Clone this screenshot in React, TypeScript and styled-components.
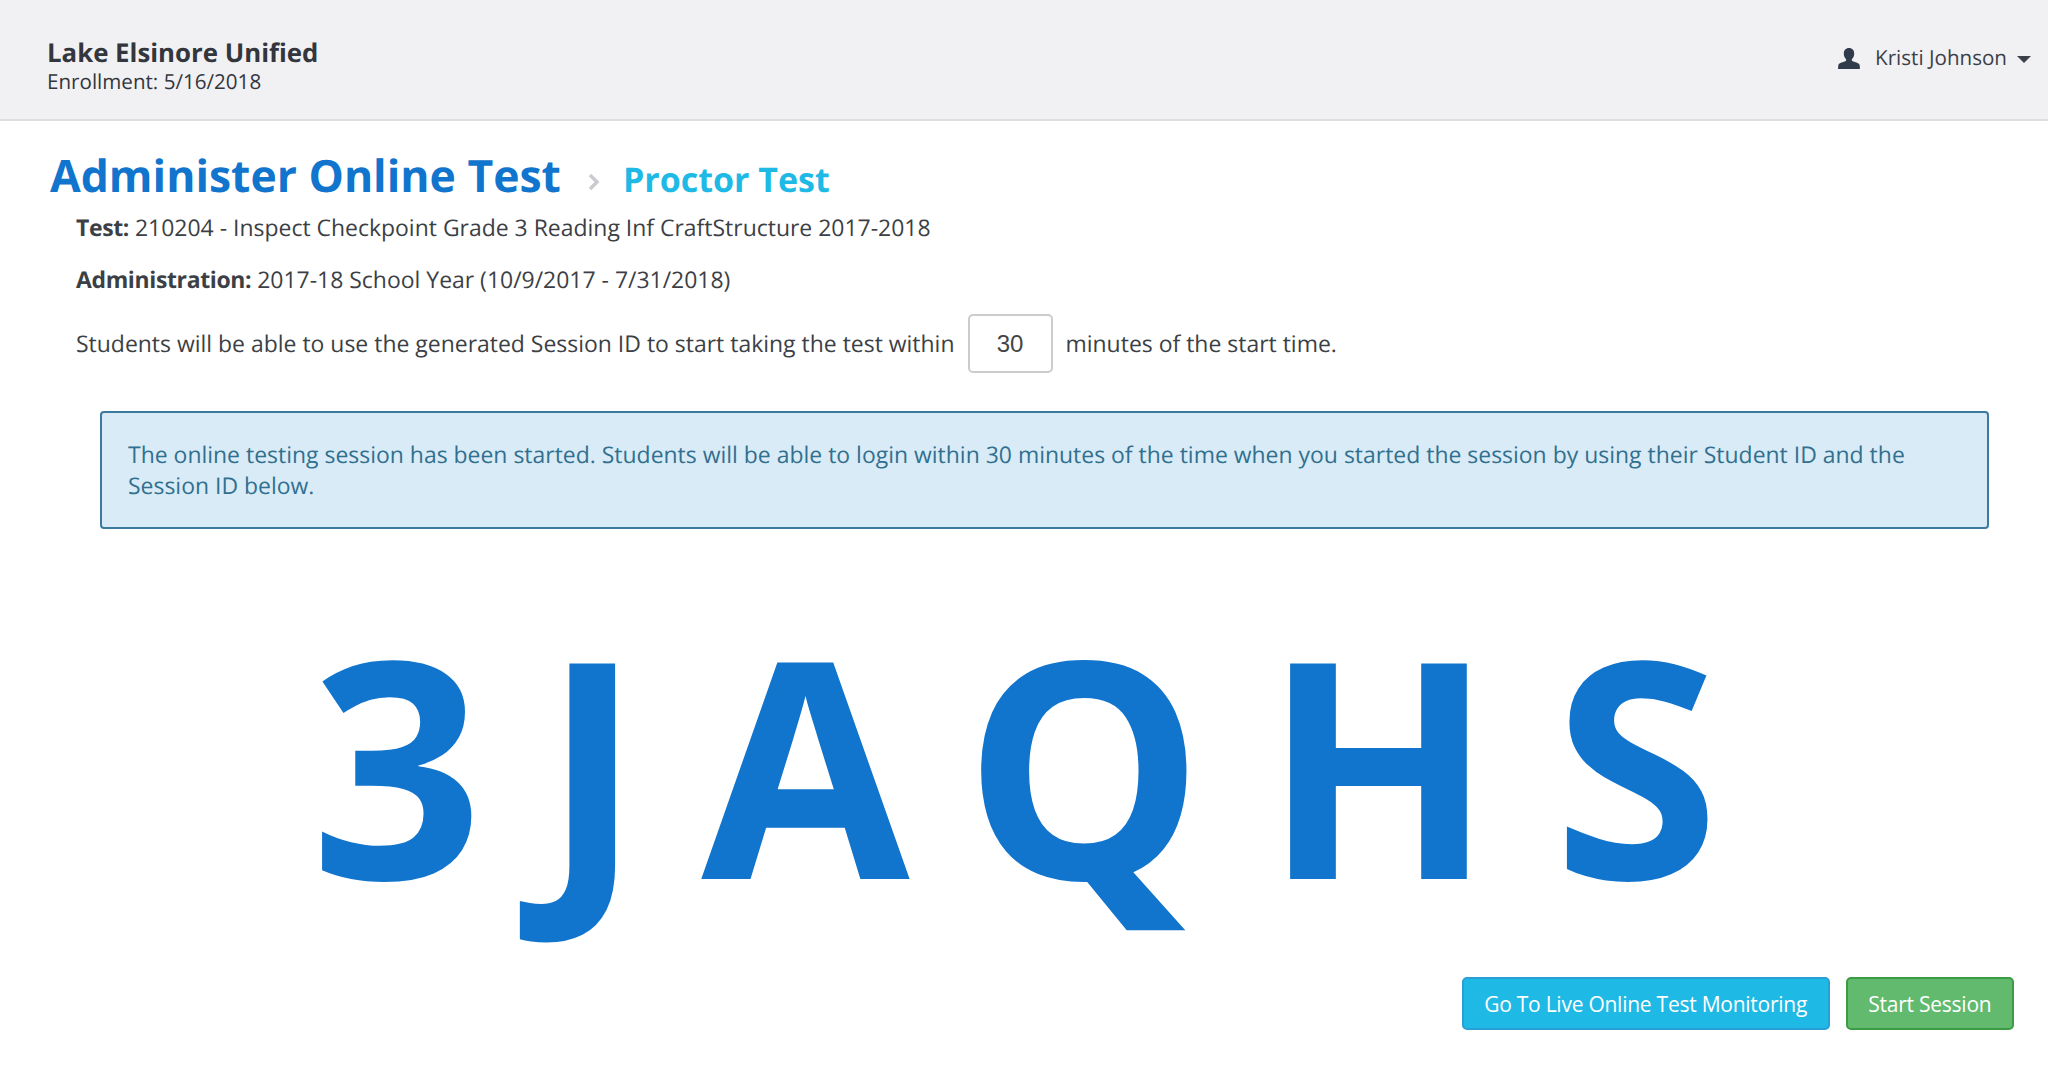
import { createGlobalStyle } from "styled-components";
import styled from "styled-components";

const GlobalStyle = createGlobalStyle`
  html, body {
    margin: 0;
    padding: 0;
    background: #fff;
  }
  body {
    font-family: "Open Sans", "Liberation Sans", sans-serif;
    font-size: 22.960px;
    color: #3c3f45;
    text-rendering: geometricPrecision;
  }
`;

const App = () => {
  return (
    <Page>
      <GlobalStyle />
      <Header>
        <div>
          <District>Lake Elsinore Unified</District>
          <Enrollment>Enrollment: 5/16/2018</Enrollment>
        </div>
        <UserMenu>
          <svg width="22" height="21" viewBox="0 0 22 21">
            <path
              fill="#2f3a4a"
              d="M11 0c3.200 0 5.200 2.200 5.200 5.600 0 2.400-.9 4.300-2.100 5.500-.5.5-.5 1.500.2 1.900 2.300 1.200 6.600 1.900 7.200 3.700.3 1 .4 2.600.4 4.300H.1c0-1.700.1-3.300.4-4.300.6-1.800 4.900-2.500 7.200-3.700.7-.4.7-1.400.2-1.900-1.200-1.200-2.100-3.100-2.100-5.500C5.800 2.200 7.800 0 11 0z"
            />
          </svg>
          <UserName>Kristi Johnson</UserName>
          <Caret />
        </UserMenu>
      </Header>
      <Content>
        <TitleRow>
          <Title>Administer Online Test</Title>
          <Chevron width="12" height="20" viewBox="0 0 12 20">
            <path d="M2 3l7 7-7 7" fill="none" stroke="#c9cbce" strokeWidth="3.500" />
          </Chevron>
          <SubTitle>Proctor Test</SubTitle>
        </TitleRow>
        <Details>
          <Line>
            <Label>Test:</Label> 210204 - Inspect Checkpoint Grade 3 Reading Inf CraftStructure 2017-2018
          </Line>
          <AdminLine>
            <Label>Administration:</Label> 2017-18 School Year (10/9/2017 - 7/31/2018)
          </AdminLine>
          <WindowLine>
            Students will be able to use the generated Session ID to start taking the test within
            <MinutesInput defaultValue="30" />
            minutes of the start time.
          </WindowLine>
        </Details>
        <SessionPanel>
          <Alert>
            The online testing session has been started. Students will be able to login within 30
            minutes of the time when you started the session by using their Student ID and the
            Session ID below.
          </Alert>
          <SessionCode>
            3J<KernedLetter>A</KernedLetter>QHS
          </SessionCode>
        </SessionPanel>
        <Actions>
          <ActionButton $bg="#1fb9e5" $border="#2a9fd6">
            Go To Live Online Test Monitoring
          </ActionButton>
          <ActionButton $bg="#62ba6e" $border="#3c9c46">
            Start Session
          </ActionButton>
        </Actions>
      </Content>
    </Page>
  );
};

const Page = styled.div`
  width: 2048px;
  height: 1070px;
  overflow: hidden;
`;

const Header = styled.header`
  height: 119px;
  box-sizing: content-box;
  background: #f1f1f4;
  border-bottom: 2px solid #dedee0;
  display: flex;
  justify-content: space-between;
  align-items: center;
  padding: 0 17px 0 47px;
`;

const District = styled.div`
  font-size: 25.800px;
  font-weight: 700;
  line-height: 34px;
  margin-top: 10px;
  color: #33373d;
`;

const Enrollment = styled.div`
  font-size: 20.600px;
  line-height: 26px;
  color: #33373d;
`;

const UserMenu = styled.div`
  display: flex;
  align-items: center;
  margin-top: -3px;
`;

const UserName = styled.span`
  font-size: 20.600px;
  margin-left: 15px;
  color: #3c4048;
`;

const Caret = styled.span`
  width: 0;
  height: 0;
  margin-left: 10px;
  margin-top: 3px;
  border-left: 7px solid transparent;
  border-right: 7px solid transparent;
  border-top: 7px solid #3c4048;
`;

const Content = styled.main`
  padding: 25px 34px 0 50px;
`;

const TitleRow = styled.div`
  display: flex;
  align-items: baseline;
`;

const Title = styled.h1`
  margin: 0;
  font-size: 44.500px;
  font-weight: 700;
  line-height: 60px;
  color: #1174cd;
`;

const Chevron = styled.svg`
  margin-left: 27px;
`;

const SubTitle = styled.h2`
  margin: 0 0 0 23px;
  font-size: 34px;
  font-weight: 700;
  line-height: 48px;
  color: #1fb9e5;
`;

const Details = styled.div`
  padding-left: 26px;
`;

const Line = styled.div`
  line-height: 33px;
  margin-top: 5px;
`;

const Label = styled.b`
  font-weight: 700;
  letter-spacing: -0.350px;
`;

const AdminLine = styled(Line)`
  margin-top: 19px;
`;

const WindowLine = styled.div`
  display: flex;
  align-items: center;
  margin-top: 18px;
  line-height: 33px;
`;

const MinutesInput = styled.input`
  width: 85px;
  height: 59px;
  box-sizing: border-box;
  margin: 0 13px;
  border: 2px solid #ccc;
  border-radius: 5px;
  text-align: center;
  font-family: "Liberation Sans", Arial, sans-serif;
  font-size: 24px;
  color: #444;
`;

const SessionPanel = styled.div`
  margin: 38px 25px 0 50px;
`;

const Alert = styled.div`
  padding: 26px;
  border: 2px solid #3d7b9e;
  border-radius: 4px;
  background: #d9ebf6;
  color: #31708f;
  line-height: 31px;
`;

const SessionCode = styled.div`
  margin-top: 29px;
  text-align: center;
  font-size: 302px;
  font-weight: 700;
  line-height: 410px;
  letter-spacing: 59px;
  color: #1174cd;
`;

const KernedLetter = styled.span`
  letter-spacing: 54px;
`;

const Actions = styled.div`
  display: flex;
  justify-content: flex-end;
  gap: 16px;
  margin-top: 9px;
`;

const ActionButton = styled.button<{ $bg: string; $border: string }>`
  height: 53px;
  padding: 0 20.600px;
  border: 2px solid ${(p) => p.$border};
  border-radius: 5px;
  background: ${(p) => p.$bg};
  color: #fff;
  font-family: inherit;
  font-size: 21px;
  font-weight: 500;
  letter-spacing: -0.250px;
`;

export default App;
